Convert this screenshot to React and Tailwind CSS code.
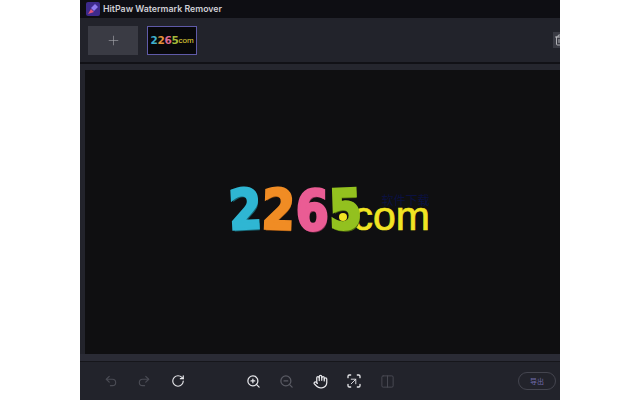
import React from "react";
import { Plus, Undo2, Redo2, RotateCw, ZoomIn, ZoomOut, Hand, Scan, Columns2, Trash2, ArrowUpRight } from "lucide-react";

const Digit = ({ className, children }) => (
  <span className={`inline-block w-[33.5px] text-center scale-x-95 scale-y-110 ${className}`}>{children}</span>
);

const BigLogo = () => (
  <div className="relative w-[203px] h-[46px] flex font-['DejaVu_Sans',sans-serif] leading-none">
    <div className="flex font-bold text-[50px] leading-[46px] h-[46px] shrink-0">
      <Digit className="text-[#2fb6d3] -rotate-3 [-webkit-text-stroke:2.5px_#2fb6d3] [text-shadow:1px_2px_0_#17616f]">2</Digit>
      <Digit className="text-[#f08c24] rotate-2 [-webkit-text-stroke:2.5px_#f08c24] [text-shadow:1px_2px_0_#8a4a10]">2</Digit>
      <Digit className="text-[#ea5c94] [-webkit-text-stroke:2.5px_#ea5c94] [text-shadow:1px_2px_0_#8a2f55]">6</Digit>
      <Digit className="text-[#93c11f] -rotate-2 [-webkit-text-stroke:2.5px_#93c11f] [text-shadow:1px_2px_0_#4e6a0c]">5</Digit>
    </div>
    <span className="absolute left-[111px] top-[26px] w-[8px] h-[8px] rounded-full bg-[#f1e423]" />
    <span className="text-[#f1e423] text-[41px] font-['Liberation_Sans',sans-serif] leading-[24px] h-[24px] mt-[17px] -ml-[9px] [-webkit-text-stroke:0.7px_#f1e423]">com</span>
    <span className="absolute left-[154px] top-[8px] text-[#0b1140] text-[12px] font-['Noto_Sans_CJK_SC',sans-serif] leading-[10px] whitespace-nowrap">软件下载</span>
  </div>
);

const SmallLogo = () => (
  <div className="flex items-end font-['DejaVu_Sans',sans-serif] leading-none">
    <span className="flex font-bold text-[10.5px] tracking-[-0.3px]">
      <span className="text-[#3fb0cc]">2</span>
      <span className="text-[#e2913a]">2</span>
      <span className="text-[#dc6a92]">6</span>
      <span className="text-[#a3b83a]">5</span>
    </span>
    <span className="text-[#e6da3a] text-[8px] font-['Liberation_Sans',sans-serif]">com</span>
  </div>
);

const ToolIcon = ({ children }) => (
  <div className="w-[33.5px] flex justify-center shrink-0">{children}</div>
);

export default function App() {
  return (
    <div className="h-[400px] w-[640px] bg-white overflow-hidden">
      <div className="ml-[80px] w-[480px] h-full flex flex-col bg-[#22232b] overflow-hidden font-['Inter',sans-serif]">
        {/* title bar */}
        <div className="h-[18px] shrink-0 bg-[#0e0e13] flex items-center pl-[6px] gap-[3px]">
          <svg width="14" height="14" viewBox="0 0 14 14">
            <rect width="14" height="14" rx="2" fill="#3d2a8c" />
            <path d="M2 12 L5 7 L8 10 Z" fill="#e2557a" />
            <path d="M5 6 L9 2 L12 5 L8 9 Z" fill="#8f7bf0" />
          </svg>
          <span className="text-[#cfcfd5] text-[8.8px] font-semibold leading-none">HitPaw Watermark Remover</span>
        </div>

        {/* thumbnails */}
        <div className="h-[44px] shrink-0 flex items-center pl-[8px] bg-[#22232b]">
          <button className="w-[50px] h-[29px] bg-[#3a3b44] flex items-center justify-center shrink-0">
            <Plus size={15} strokeWidth={1} className="text-[#a5a5ab]" />
          </button>
          <div className="ml-[9px] w-[50px] h-[29px] bg-[#08080a] border-[1.5px] border-[#5f5aa8] flex items-center justify-center shrink-0">
            <SmallLogo />
          </div>
          <div className="ml-auto w-[7px] h-[16px] bg-[#3a3b44] overflow-hidden shrink-0">
            <Trash2 size={12} strokeWidth={1.5} className="text-[#d8d8dc] mt-[2px] ml-[1px]" />
          </div>
        </div>

        <div className="h-[2px] shrink-0 bg-[#111116]" />
        <div className="h-[6px] shrink-0 bg-[#25262e]" />

        {/* canvas */}
        <div className="h-[284px] shrink-0 ml-[5px] bg-[#0f0f11] flex items-center justify-center pl-[13px] pb-[4px]">
          <BigLogo />
        </div>

        <div className="h-[7px] shrink-0 bg-[#2a2b35]" />
        <div className="h-px shrink-0 bg-[#16161b]" />

        {/* bottom toolbar */}
        <div className="flex-1 flex items-center pl-[14px] pr-[4px]">
          <ToolIcon><Undo2 size={14} className="text-[#4a4b54]" /></ToolIcon>
          <ToolIcon><Redo2 size={14} className="text-[#4a4b54]" /></ToolIcon>
          <ToolIcon><RotateCw size={14} strokeWidth={2} className="text-[#e6e6ea]" /></ToolIcon>
          <div className="w-[42px] shrink-0" />
          <ToolIcon><ZoomIn size={15} className="text-[#e6e6ea]" /></ToolIcon>
          <ToolIcon><ZoomOut size={15} className="text-[#5a5b64]" /></ToolIcon>
          <ToolIcon><Hand size={15} className="text-[#e6e6ea]" /></ToolIcon>
          <ToolIcon>
            <div className="relative">
              <Scan size={16} className="text-[#e6e6ea]" />
              <ArrowUpRight size={11} className="text-[#e6e6ea] absolute left-[2.5px] top-[2.5px]" />
            </div>
          </ToolIcon>
          <ToolIcon><Columns2 size={15} strokeWidth={1.5} className="text-[#4a4b54]" /></ToolIcon>
          <button className="ml-auto w-[38px] h-[18px] rounded-full border border-[#44454f] flex items-center justify-center text-[7px] leading-none text-[#6f6aa8] font-['Noto_Sans_CJK_SC',sans-serif] shrink-0">
            导出
          </button>
        </div>
      </div>
    </div>
  );
}
